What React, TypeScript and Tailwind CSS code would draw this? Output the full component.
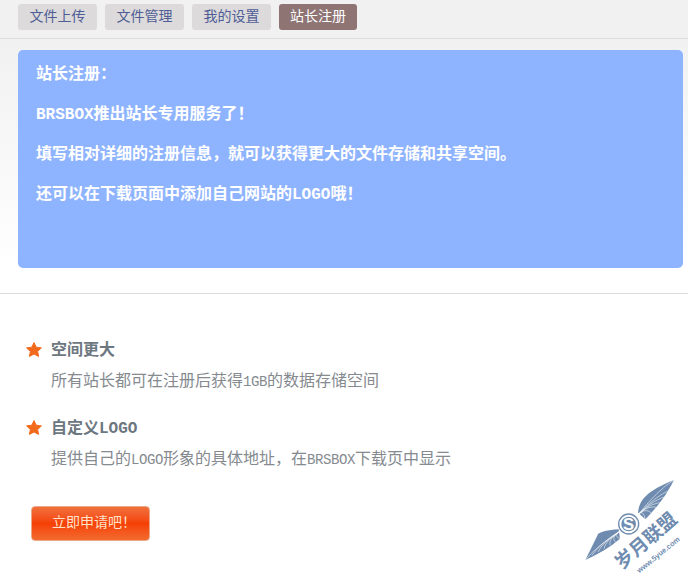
const tabs = ['文件上传', '文件管理', '我的设置'];

const features = [
  { title: '空间更大', text: ['所有站长都可在注册后获得', '1GB', '的数据存储空间'] },
  { title: '自定义LOGO', text: ['提供自己的', 'LOGO', '形象的具体地址，在', 'BRSBOX', '下载页中显示'] },
];

const intro = [
  '站长注册：',
  'BRSBOX推出站长专用服务了！',
  '填写相对详细的注册信息，就可以获得更大的文件存储和共享空间。',
  '还可以在下载页面中添加自己网站的LOGO哦！',
];

function Star() {
  return (
    <svg width="16" height="15" viewBox="0 0 16 15" className="mb-[3px] shrink-0">
      <path
        d="M8 .6 10.2 5.2 15.4 5.9 11.6 9.4 12.6 14.4 8 12 3.4 14.4 4.4 9.4.6 5.9 5.8 5.2Z"
        fill="#f26a1b"
        stroke="#f26a1b"
        strokeLinejoin="round"
      />
    </svg>
  );
}

// feather tips in crop coords, each fans out from the wing root
const upperTips = [[312, 30], [306, 58], [296, 78], [282, 98], [264, 114], [246, 132], [226, 148]];
const lowerTips = [[46, 270], [66, 256], [84, 246], [102, 236], [120, 226], [136, 216], [150, 206]];

function Watermark() {
  const c = '#6f8cb0';
  return (
    <svg width="118" height="112" viewBox="0 0 354 336" className="absolute left-[570px] top-[470px]">
      <path d="M204 128 C208 92 224 66 312 30 C292 68 276 96 226 148 Z" fill={c} />
      {upperTips.map(([x, y]) => (
        <path key={x} d={`M206 132 Q${(x + 214) / 2} ${(y + 90) / 2} ${x} ${y}`} fill="none" stroke="white" strokeWidth="1.6" />
      ))}
      <path d="M146 178 C112 180 92 186 84 192 C74 214 58 246 46 270 C84 252 120 232 150 206 Z" fill={c} />
      {lowerTips.map(([x, y]) => (
        <path key={x} d={`M146 186 Q${(x + 110) / 2} ${(y + 190) / 2} ${x} ${y}`} fill="none" stroke="white" strokeWidth="1.6" />
      ))}
      <circle cx="176" cy="162" r="30" fill="white" stroke={c} strokeWidth="4" />
      <circle cx="176" cy="162" r="22" fill={c} />
      <text x="176" y="180" textAnchor="middle" fill="white" fontSize="50" fontWeight="700" fontFamily="Liberation Sans, sans-serif">
        S
      </text>
      <text
        x="156"
        y="300"
        transform="rotate(-41 156 300)"
        fill={c}
        fontSize="56"
        fontWeight="700"
        fontFamily="Noto Sans CJK SC, sans-serif"
      >
        岁月联盟
      </text>
      <text
        x="208"
        y="310"
        transform="rotate(-39 208 310)"
        fill={c}
        fontSize="22"
        fontWeight="700"
        fontFamily="Liberation Sans, sans-serif"
      >
        www.5yue.com
      </text>
    </svg>
  );
}

export default function App() {
  return (
    <div className="relative h-[582px] w-[688px] overflow-hidden bg-white font-['Liberation_Mono','Noto_Sans_CJK_SC',monospace]">
      <div className="bg-[#f1f1f1]">
        <div className="flex h-[39px] gap-2 border-b border-[#dcdcdc] px-[18px] pt-1">
          {tabs.map((t) => (
            <div
              key={t}
              className="flex h-[26px] w-[79px] items-center justify-center rounded-[3px] bg-[#dcdada] text-[14px] text-[#4f5d96]"
            >
              {t}
            </div>
          ))}
          <div className="flex h-[26px] w-[78px] items-center justify-center rounded-[3px] bg-[#8f7474] text-[14px] text-white">
            站长注册
          </div>
        </div>
        <div className="bg-gradient-to-b from-[#f1f1f1] to-white pl-[18px] pr-[5px] pt-[11px]">
          <div className="flex h-[218px] flex-col gap-[22px] rounded-[5px] bg-[#8fb4ff] px-[18px] pt-[16px] text-[16px] font-bold leading-[18px] text-white">
            {intro.map((line) => (
              <p key={line} className="whitespace-nowrap">{line}</p>
            ))}
          </div>
        </div>
      </div>
      <div className="mt-[25px] border-t border-[#dcdcdc] pl-[26px] pt-[47px]">
        <div className="flex flex-col gap-[27px]">
          {features.map((f) => (
            <div key={f.title}>
              <div className="flex h-[20px] items-center gap-[9px]">
                <Star />
                <h3 className="text-[16px] font-bold leading-[20px] text-[#6d7780]">{f.title}</h3>
              </div>
              <p className="mt-[11px] whitespace-nowrap pl-[25px] text-[16px] leading-[20px] text-[#858a8f]">
                {f.text.map((part, i) =>
                  i % 2 === 1 ? (
                    <span key={part} className="text-[14px] tracking-[-0.4px]">{part}</span>
                  ) : (
                    part
                  ),
                )}
              </p>
            </div>
          ))}
        </div>
        <button className="ml-[5px] mt-[36px] flex h-[35px] w-[119px] items-center rounded-[4px] border border-[#eba98a] bg-gradient-to-b from-[#f0703a] via-[#f63f02] to-[#f26a2c] pl-[20px] text-[14px] text-[#ffe2c8]">
          立即申请吧！
        </button>
      </div>
      <Watermark />
    </div>
  );
}
